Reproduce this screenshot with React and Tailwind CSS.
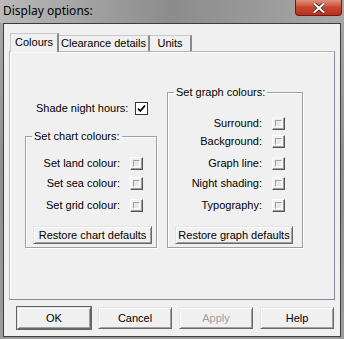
import React from 'react';

const ui = { fontFamily: '"Liberation Sans", Arial, sans-serif' };

function Swatch() {
  return (
    <div className="w-[13px] h-[13px] bg-[#f0f0f0] border border-t-white border-l-white border-b-[#555] border-r-[#555] shadow-[inset_-1px_-1px_0_#a0a0a0] p-[2px]">
      <div className="w-full h-full bg-[#e8e8e8] border border-t-[#a0a0a0] border-l-[#a0a0a0] border-b-white border-r-white" />
    </div>
  );
}

function Row({ label, className = '' }) {
  return (
    <div className={`h-[18px] flex items-center justify-end gap-[10px] ${className}`}>
      <span>{label}</span>
      <Swatch />
    </div>
  );
}

function Btn({ children, disabled, isDefault, className = '' }) {
  return (
    <button
      className={`h-[22px] flex items-center justify-center bg-[#f0f0f0] border border-t-[#e3e3e3] border-l-[#e3e3e3] border-b-[#696969] border-r-[#696969] shadow-[inset_1px_1px_0_white,inset_-1px_-1px_0_#a0a0a0] ${isDefault ? 'outline outline-1 outline-[#646464]' : ''} ${disabled ? 'text-[#a0a0a0]' : 'text-black'} ${className}`}
    >
      {children}
    </button>
  );
}

export default function App() {
  return (
    <div
      className="w-[344px] h-[339px] flex flex-col bg-gradient-to-b from-[#a9a9a9] via-[#8f8f8f] to-[#9c9c9c] text-[11px] leading-[13px] text-black"
      style={ui}
    >
      {/* Title bar */}
      <div className="h-[23px] flex justify-between bg-gradient-to-r from-[#b9b9b9] via-[#8c8c8c] to-[#a8a8a8]">
        <div className="pl-[3px] pt-[4px] text-[12px] leading-[14px] text-black" style={{ fontFamily: '"Noto Sans", "Open Sans", sans-serif' }}>
          Display options:
        </div>
        <div className="mr-[2px] w-[47px] h-[16px] rounded-b-[4px] border border-t-0 border-[#6b1b10] bg-gradient-to-b from-[#e0907c] via-[#c8462e] to-[#b8301c] flex items-center justify-center">
          <svg width="12" height="10" viewBox="0 0 12 10">
            <path d="M1.5 1 L10.5 9 M10.5 1 L1.5 9" stroke="#3b2a2a" strokeWidth="3.6" strokeLinecap="square" />
            <path d="M1.5 1 L10.5 9 M10.5 1 L1.5 9" stroke="white" strokeWidth="2" strokeLinecap="square" />
          </svg>
        </div>
      </div>

      {/* Window body */}
      <div className="mx-[3px] mb-[2px] flex-1 border border-[#3c3c3c] bg-[#f0f0f0] flex flex-col">
        <div className="px-[5px] pt-[8px]">
          {/* Tabs */}
          <div className="flex items-end h-[19px] pl-[1px]">
            <div className="h-[19px] w-[49px] -mb-px z-10 bg-[#f0f0f0] border-t border-l border-[#c8c8c8] border-r-2 border-r-[#898989] flex items-center justify-center pb-[2px]">
              Colours
            </div>
            <div className="h-[16px] w-[91px] border-t border-[#c8c8c8] border-r-2 border-r-[#898989] flex items-center justify-center">
              Clearance details
            </div>
            <div className="h-[16px] w-[42px] border-t border-[#c8c8c8] border-r-2 border-r-[#898989] flex items-center justify-center">
              Units
            </div>
          </div>

          {/* Panel */}
          <div className="h-[249px] border border-[#b4b4b4] border-r-[#898c95] border-b-[#898c95] shadow-[inset_1px_1px_0_white] flex pl-[15px] gap-[10px]">
            {/* Left column */}
            <div className="flex flex-col mt-[50px]">
              <div className="h-[13px] flex items-center pl-[11px] gap-[7px]">
                <span>Shade night hours:</span>
                <div className="w-[13px] h-[13px] bg-white border border-[#333] flex items-center justify-center">
                  <svg width="9" height="9" viewBox="0 0 9 9">
                    <path d="M1 4.5 L3.3 7 L8 1.5" fill="none" stroke="black" strokeWidth="1.8" />
                  </svg>
                </div>
              </div>
              <fieldset className="mt-[15px] w-[132px] min-w-0 border border-[#a0a0a0] shadow-[inset_1px_1px_0_white,1px_1px_0_white] pb-[3px]">
                <legend className="ml-[6px] px-[2px]">Set chart colours:</legend>
                <Row label="Set land colour:" className="mt-[11px] pr-[13px]" />
                <Row label="Set sea colour:" className="mt-[2px] pr-[13px]" />
                <Row label="Set grid colour:" className="mt-[4px] pr-[13px]" />
                <Btn className="mt-[12px] ml-[7px] w-[119px] !h-[18px]">Restore chart defaults</Btn>
              </fieldset>
            </div>

            {/* Right column */}
            <div className="flex flex-col mt-[34px]">
              <fieldset className="w-[136px] min-w-0 border border-[#a0a0a0] shadow-[inset_1px_1px_0_white,1px_1px_0_white] pb-[3px]">
                <legend className="ml-[6px] px-[2px]">Set graph colours:</legend>
                <Row label="Surround:" className="mt-[15px] pr-[17px]" />
                <Row label="Background:" className="mt-[0px] pr-[17px]" />
                <Row label="Graph line:" className="mt-[4px] pr-[17px]" />
                <Row label="Night shading:" className="mt-[2px] pr-[17px]" />
                <Row label="Typography:" className="mt-[4px] pr-[17px]" />
                <Btn className="mt-[12px] ml-[7px] w-[118px] !h-[18px]">Restore graph defaults</Btn>
              </fieldset>
            </div>
          </div>
        </div>

        {/* Dialog buttons */}
        <div className="flex gap-[7px] pl-[13px] mt-[7px]">
          <Btn isDefault className="w-[74px]">OK</Btn>
          <Btn className="w-[74px]">Cancel</Btn>
          <Btn disabled className="w-[74px]">Apply</Btn>
          <Btn className="w-[74px]">Help</Btn>
        </div>
      </div>
    </div>
  );
}
